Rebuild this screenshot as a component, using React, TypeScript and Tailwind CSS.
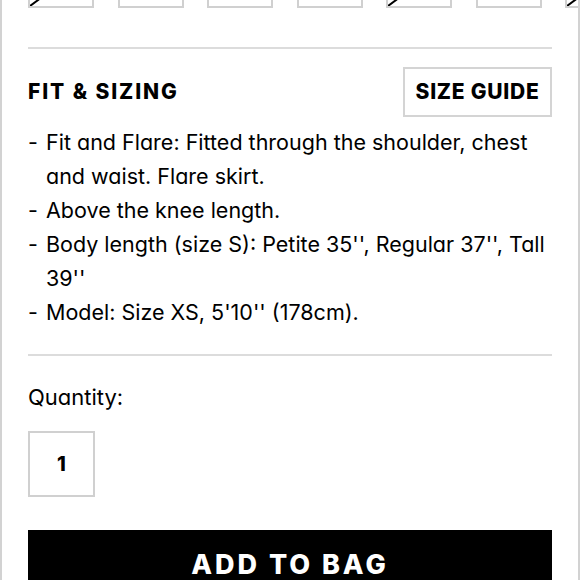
const sizes = [true, false, false, false, true, false, true];

const fitNotes = [
  "Fit and Flare: Fitted through the shoulder, chest and waist. Flare skirt.",
  "Above the knee length.",
  "Body length (size S): Petite 35'', Regular 37'', Tall 39''",
  "Model: Size XS, 5'10'' (178cm).",
];

function SizeBox({ crossed }: { crossed: boolean }) {
  return (
    <div className="relative h-[50px] w-[66px] shrink-0 border-2 border-[#d0d0d0] bg-white">
      {crossed && (
        <svg
          className="absolute inset-0 h-full w-full"
          viewBox="0 0 62 46"
          preserveAspectRatio="none"
        >
          <line x1="0" y1="46" x2="62" y2="0" stroke="#000" strokeWidth="2" />
        </svg>
      )}
    </div>
  );
}

export default function App() {
  return (
    <div className="h-[580px] w-[580px] overflow-hidden border-x-2 border-[#d2d2d2] bg-white px-[26px] font-['Inter',sans-serif] text-black [font-feature-settings:'cv11']">
      <div className="-mt-[42px] flex gap-[23.5px]">
        {sizes.map((c, i) => (
          <SizeBox key={i} crossed={c} />
        ))}
      </div>

      <div className="mt-[39px] border-t-2 border-[#dcdcdc]" />

      <div className="mt-[18px] flex items-center justify-between">
        <h3 className="text-[21px] font-extrabold tracking-[0.09em]">FIT &amp; SIZING</h3>
        <button className="flex h-[50px] w-[149px] items-center justify-center border-2 border-[#d4d4d4] text-[21px] font-extrabold tracking-[0.035em]">
          SIZE GUIDE
        </button>
      </div>

      <ul className="mt-[8px] text-[21.5px] leading-[34px]">
        {fitNotes.map((n) => (
          <li key={n} className="flex">
            <span className="w-[18px] shrink-0">-</span>
            <span>{n}</span>
          </li>
        ))}
      </ul>

      <div className="mt-[25px] border-t-2 border-[#dcdcdc]" />

      <p className="mt-[24px] text-[22px] leading-[34px]">Quantity:</p>

      <div className="mt-[17px] flex h-[66px] w-[67px] items-center justify-center border-2 border-[#d0d0d0] text-[20px] font-extrabold">
        1
      </div>

      <button className="mt-[33px] flex h-[64px] w-full items-start justify-center bg-black pt-[20px] text-[27px] font-extrabold leading-[30px] tracking-[0.11em] text-white">
        ADD TO BAG
      </button>
    </div>
  );
}
